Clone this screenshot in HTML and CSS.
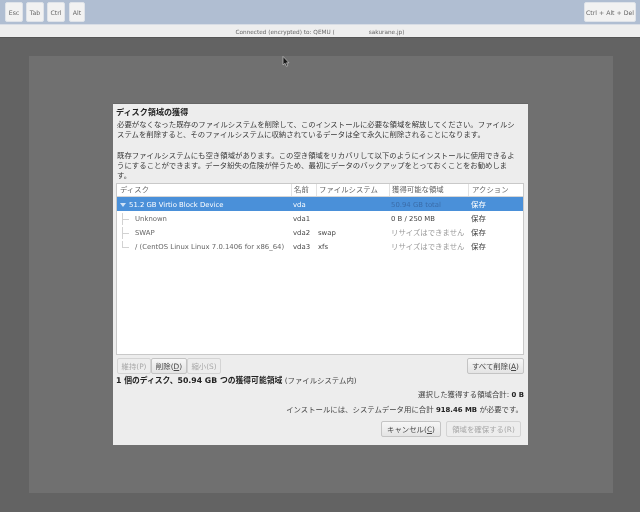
FILE: index.html
```html
<!DOCTYPE html>
<html lang="ja">
<head>
<meta charset="utf-8">
<title>ディスク領域の獲得</title>
<link rel="stylesheet" href="styles.css">
</head>
<body>
<div class="toolbar">
  <div class="keys">
    <button class="key">Esc</button>
    <button class="key">Tab</button>
    <button class="key">Ctrl</button>
    <button class="key key-alt">Alt</button>
  </div>
  <button class="key key-wide">Ctrl + Alt + Del</button>
</div>
<div class="status"><span>Connected (encrypted) to: QEMU (</span><span class="status-gap"></span><span>sakurane.jp)</span></div>
<main class="screen">
  <svg class="cursor" width="8" height="11" viewBox="0 0 9 13"><path d="M1 0.5V10.5L3.4 8.6L5 12.2L6.6 11.5L5.1 8H8Z" fill="#1a1a1a" stroke="#ddd" stroke-width="0.7"/></svg>
  <div class="guest">
    <section class="dialog">
      <h1 class="title">ディスク領域の獲得</h1>
      <p class="para">必要がなくなった既存のファイルシステムを削除して、このインストールに必要な領域を解放してください。ファイルシ<br>ステムを削除すると、そのファイルシステムに収納されているデータは全て永久に削除されることになります。</p>
      <p class="para para-second">既存ファイルシステムにも空き領域があります。この空き領域をリカバリして以下のようにインストールに使用できるよ<br>うにすることができます。データ紛失の危険が伴うため、最初にデータのバックアップをとっておくことをお勧めしま<br>す。</p>
      <div class="table">
        <div class="row head">
          <div class="c c-disk">ディスク</div>
          <div class="c c-name sep">名前</div>
          <div class="c c-fs sep">ファイルシステム</div>
          <div class="c c-free sep">獲得可能な領域</div>
          <div class="c c-act sep">アクション</div>
        </div>
        <div class="row selected">
          <div class="c c-disk latin"><span class="arrow"></span>51.2 GB Virtio Block Device</div>
          <div class="c c-name latin">vda</div>
          <div class="c c-fs"></div>
          <div class="c c-free latin faint">50.94 GB total</div>
          <div class="c c-act">保存</div>
        </div>
        <div class="row">
          <div class="c c-disk child latin"><span class="tree"></span>Unknown</div>
          <div class="c c-name latin">vda1</div>
          <div class="c c-fs"></div>
          <div class="c c-free latin">0 B / 250 MB</div>
          <div class="c c-act">保存</div>
        </div>
        <div class="row">
          <div class="c c-disk child latin"><span class="tree"></span>SWAP</div>
          <div class="c c-name latin">vda2</div>
          <div class="c c-fs latin">swap</div>
          <div class="c c-free grey">リサイズはできません</div>
          <div class="c c-act">保存</div>
        </div>
        <div class="row">
          <div class="c c-disk child latin"><span class="tree tree-last"></span>/ (CentOS Linux Linux 7.0.1406 for x86_64)</div>
          <div class="c c-name latin">vda3</div>
          <div class="c c-fs latin">xfs</div>
          <div class="c c-free grey">リサイズはできません</div>
          <div class="c c-act">保存</div>
        </div>
      </div>
      <div class="actions">
        <div class="group">
          <button class="btn off w-keep">維持(P)</button>
          <button class="btn w-del">削除(<u>D</u>)</button>
          <button class="btn off w-shrink">縮小(S)</button>
        </div>
        <button class="btn w-all">すべて削除(<u>A</u>)</button>
      </div>
      <p class="summary"><b>1 個のディスク、50.94 GB つの獲得可能領域</b> (ファイルシステム内)</p>
      <p class="total">選択した獲得する領域合計: <b>0 B</b></p>
      <p class="total second">インストールには、システムデータ用に合計 <b>918.46 MB</b> が必要です。</p>
      <div class="footer">
        <button class="btn w-cancel">キャンセル(<u>C</u>)</button>
        <button class="btn off w-reclaim">領域を確保する(R)</button>
      </div>
    </section>
  </div>
</main>
</body>
</html>
```
FILE: styles.css
```css
* { box-sizing: border-box; }
html, body { margin: 0; height: 100%; }
body {
  width: 640px;
  height: 512px;
  overflow: hidden;
  display: flex;
  flex-direction: column;
  font-family: "DejaVu Sans", "Noto Sans CJK JP", sans-serif;
  font-size: 7.4px;
  color: #2e3436;
  background: #636363;
  filter: blur(0.3px);
}
button { font: inherit; margin: 0; cursor: default; }

.toolbar {
  height: 24px;
  flex: none;
  display: flex;
  justify-content: space-between;
  padding: 2px 4px 2px 5px;
  background: #b0bed2;
}
.keys { display: flex; gap: 3px; }
.key {
  width: 18px;
  height: 20px;
  padding: 0;
  font-size: 6.2px;
  color: #666;
  background: #f2f2f2;
  border: 1px solid #dfe3e9;
  border-radius: 2px;
}
.key-alt { width: 16px; margin-left: 1px; }
.key-wide { width: 52px; }

.status {
  height: 13px;
  flex: none;
  display: flex;
  justify-content: center;
  align-items: center;
  padding-top: 1px;
  font-size: 5.75px;
  color: #666;
  background: #eeeeee;
  border-top: 1px solid #d8dde5;
}
.status-gap { width: 34px; }

.screen {
  position: relative;
  flex: 1;
  padding: 18px 27px 19px 29px;
  border-top: 1px solid #555;
  background: #636363;
}
.cursor { position: absolute; left: 282px; top: 18px; z-index: 2; }
.guest {
  height: 100%;
  padding-top: 47px;
  background: #707070;
}
.dialog {
  width: 415px;
  height: 342px;
  margin-left: 84px;
  padding: 3px 4px 0 3px;
  background: #ededed;
  border-top: 1px solid #666;
}
.title { margin: 0; font-size: 8.1px; line-height: 10px; font-weight: bold; color: #222; }
.para { margin: 3px 0 0 1px; line-height: 10.3px; white-space: nowrap; color: #3a3a3a; }
.para-second { margin-top: 10px; }

.table {
  height: 172px;
  margin-top: 2px;
  background: #fff;
  border: 1px solid #c9c9c9;
}
.row { display: flex; height: 14px; align-items: center; color: #444; }
.c { height: 100%; display: flex; align-items: center; white-space: nowrap; padding-left: 3px; padding-bottom: 2px; flex: none; }
.latin { font-size: 6.9px; padding-bottom: 0; padding-top: 2px; }
.c-disk { width: 174px; }
.c-name { width: 25px; padding-left: 2px; }
.c-fs { width: 73px; padding-left: 2px; }
.c-free { width: 79px; padding-left: 2px; }
.c-act { flex: 1; padding-left: 3px; }
.head { height: 13px; color: #666; border-bottom: 1px solid #d6d6d6; }
.head .c { padding-bottom: 3px; }
.sep { border-left: 1px solid #e2e2e2; }
.selected { color: #fff; background: #4a90d9; }
.faint { color: #3a6ca8; }
.grey { color: #999; }
.arrow {
  width: 0;
  height: 0;
  margin: 0 3px 0 0;
  border-left: 3px solid transparent;
  border-right: 3px solid transparent;
  border-top: 4px solid #cfe2f6;
}
.child { padding-left: 5px; color: #666; }
.tree {
  width: 13px;
  height: 100%;
  margin-right: 0;
  flex: none;
  background:
    linear-gradient(#d2d2d2, #d2d2d2) 0 0 / 1px 100% no-repeat,
    linear-gradient(#d2d2d2, #d2d2d2) 0 50% / 7px 1px no-repeat;
}
.tree-last {
  background:
    linear-gradient(#d2d2d2, #d2d2d2) 0 0 / 1px 50% no-repeat,
    linear-gradient(#d2d2d2, #d2d2d2) 0 50% / 7px 1px no-repeat;
}

.actions {
  display: flex;
  justify-content: space-between;
  margin-top: 3px;
  padding-left: 1px;
}
.group { display: flex; }
.btn {
  height: 16px;
  padding: 0 0 1px;
  color: #444;
  background: linear-gradient(#f6f6f6, #e4e4e4);
  border: 1px solid #c4c4c4;
  border-radius: 2px;
  white-space: nowrap;
}
.off { color: #a8a8a8; background: #ededed; border-color: #d4d4d4; }
.w-keep { width: 34px; }
.w-del { width: 36px; }
.w-shrink { width: 34px; }
.w-all { width: 57px; }
.w-cancel { width: 60px; }
.w-reclaim { width: 75px; }

.summary { margin: 1px 0 0; line-height: 11px; color: #444; }
.summary b { font-size: 7.8px; color: #222; }
.total b { font-size: 6.9px; color: #222; }
.total { margin: 3px 0 0; line-height: 11px; text-align: right; color: #444; }
.total.second { margin-top: 3px; padding-right: 1px; }
.footer {
  display: flex;
  justify-content: flex-end;
  gap: 5px;
  margin-top: 5px;
  padding-right: 3px;
}
```
